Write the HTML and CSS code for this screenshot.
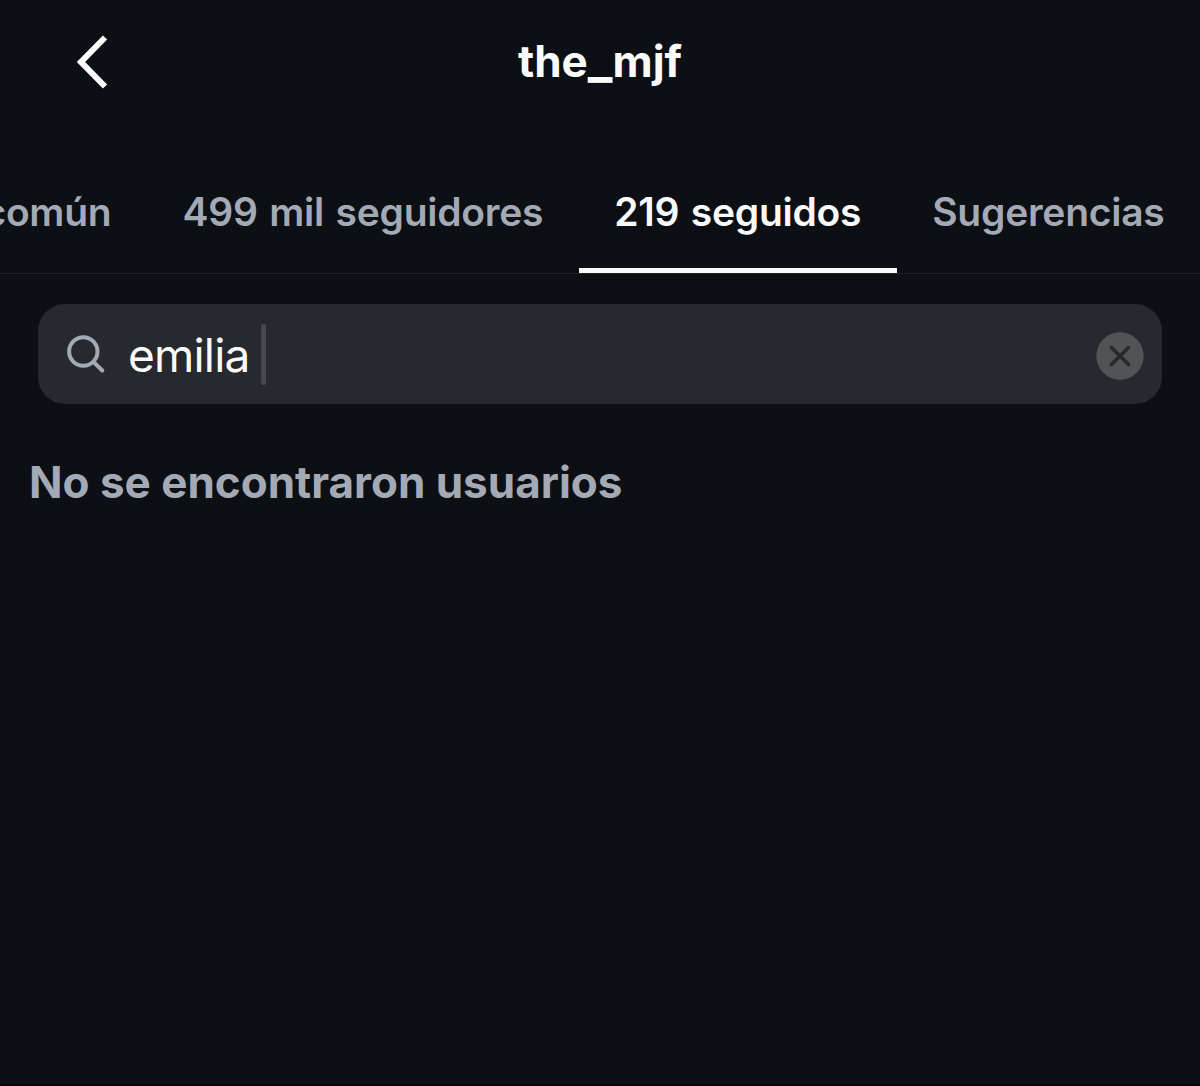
FILE: index.html
```html
<!DOCTYPE html>
<html lang="es">
<head>
    <meta charset="UTF-8">
    <meta name="viewport" content="width=device-width, initial-scale=1.0">
    <title>the_mjf</title>
    <link rel="stylesheet" href="styles.css">
</head>
<body>
    <div class="screen">
        <header class="header">
            <button class="back" type="button" aria-label="Atrás">
                <svg width="36" height="60" viewBox="0 0 36 60" fill="none" stroke="#fff" stroke-width="6">
                    <path d="M30 5.500 6 30 30 54.500"/>
                </svg>
            </button>
            <h1 class="title">the<span class="underscore">_</span>mjf</h1>
        </header>

        <nav class="tabs">
            <a class="tab tab-common">En común</a>
            <a class="tab tab-followers">499 mil seguidores</a>
            <a class="tab tab-following active">219 seguidos</a>
            <a class="tab tab-suggested">Sugerencias</a>
        </nav>

        <div class="search">
            <svg class="search-icon" width="40" height="40" viewBox="0 0 40 40" fill="none" stroke="#a3a9b5" stroke-width="4" stroke-linecap="round">
                <circle cx="17.300" cy="17.500" r="14.200"/>
                <path d="M27.500 27.800 36.300 36.500"/>
            </svg>
            <span class="query">emilia</span>
            <span class="caret"></span>
            <button class="clear" type="button" aria-label="Borrar">
                <svg width="48" height="48" viewBox="0 0 48 48">
                    <circle cx="24" cy="24" r="23.700" fill="#515357"/>
                    <path d="M15.500 15.500 32.500 32.500M32.500 15.500 15.500 32.500" stroke="#25282c" stroke-width="3.400" stroke-linecap="round"/>
                </svg>
            </button>
        </div>

        <p class="empty">No se encontraron usuarios</p>
    </div>
</body>
</html>
```

FILE: styles.css
```css
* {
    box-sizing: border-box;
}

body {
    margin: 0;
    background-color: #0c0f14;
    color: #fafafa;
    font-family: Inter, "Liberation Sans", sans-serif;
}

.screen {
    height: 1086px;
    overflow: hidden;
    border-bottom: 2px solid #050609;
}

button {
    padding: 0;
    border: none;
    background: none;
}

svg {
    display: block;
}

.header {
    display: grid;
    grid-template-columns: 120px 1fr 120px;
    align-items: center;
    height: 124px;
}

.back {
    justify-self: end;
    margin-right: 9px;
}

.title {
    margin: 0 0 2px;
    font-size: 44px;
    font-weight: 700;
    line-height: 60px;
    text-align: center;
}

.underscore {
    font-size: 52px;
    line-height: 1;
}

.tabs {
    display: flex;
    justify-content: flex-end;
    height: 150px;
    padding-top: 28px;
    border-bottom: 1px solid #1e2126;
}

.tab {
    flex: none;
    padding: 35px 35.5px 0;
    color: #a3a9b5;
    font-size: 39px;
    font-weight: 600;
    line-height: 50px;
    letter-spacing: -0.25px;
    word-spacing: 2px;
    white-space: nowrap;
}

.tab.active {
    color: #fafafa;
    border-bottom: 5px solid #fafafa;
}

.search {
    display: flex;
    align-items: center;
    height: 100px;
    margin: 30px 38px 0;
    padding: 0 18px 0 28px;
    border-radius: 27px;
    background-color: #26292e;
}

.query {
    margin: 2px 0 0 22px;
    font-size: 46px;
    line-height: 60px;
    letter-spacing: -0.8px;
}

.caret {
    width: 5px;
    height: 61px;
    margin-left: 11px;
    border-radius: 2px;
    background-color: #45484c;
}

.clear {
    margin: 3px 0 0 auto;
}

.empty {
    margin: 48px 29px 0;
    color: #a3a9b5;
    font-size: 44px;
    font-weight: 700;
    line-height: 60px;
}
```
